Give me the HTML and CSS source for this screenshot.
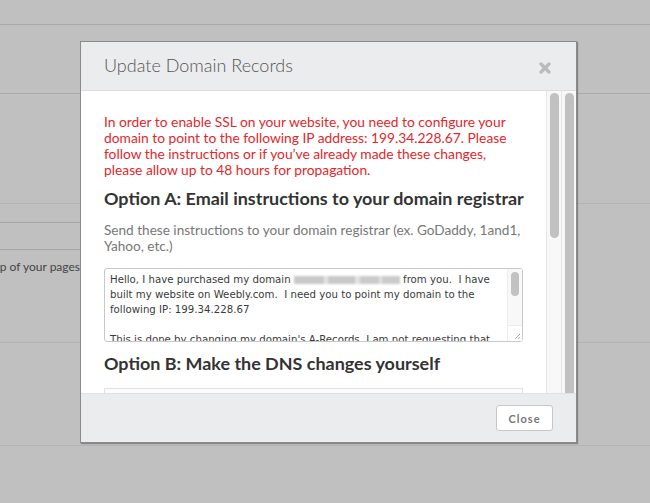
FILE: index.html
```html
<!DOCTYPE html>
<html>
<head>
<meta charset="utf-8">
<link rel="stylesheet" href="styles.css">
</head>
<body>
<div class="page">
  <div class="bg-row r1"></div>
  <div class="bg-row r2"></div>
  <div class="bg-row r3"></div>
  <div class="bg-row r4">
    <div class="bg-left">
      <div class="bl-a"></div>
      <div class="bl-b"></div>
      <div class="bl-text"><span>top of your pages</span></div>
    </div>
  </div>
  <div class="bg-row r5"></div>
</div>

<div class="modal">
  <div class="modal-head">
    <h1 class="modal-title">Update Domain Records</h1>
    <svg class="close-x" width="12" height="12" viewBox="0 0 12 12"><path d="M2 2 L10 10 M10 2 L2 10" stroke="#b9babc" stroke-width="3.2" stroke-linecap="round"/></svg>
  </div>
  <div class="modal-body">
    <div class="content">
      <p class="warn">In order to enable SSL on your website, you need to configure your domain to point to the following IP address: 199.34.228.67. Please follow the instructions or if you’ve already made these changes, please allow up to 48 hours for propagation.</p>
      <h2 class="opt">Option A: Email instructions to your domain registrar</h2>
      <p class="muted"><span class="nw">Send these instructions to your domain registrar (ex. GoDaddy, 1and1,</span><br>Yahoo, etc.)</p>
      <div class="ta">
        <div class="ta-text">Hello, I have purchased my domain <span class="blur"></span> from you.&nbsp; I have built my website on Weebly.com.&nbsp; I need you to point my domain to the following IP: 199.34.228.67<br><br>This is done by changing my domain's A-Records. I am not requesting that you change my nameservers.</div>
        <div class="ta-bar">
          <div class="ta-track"><div class="ta-thumb"></div></div>
          <div class="ta-corner">
            <svg width="8" height="8" viewBox="0 0 8 8"><path d="M7 2 L2 7 M7 5 L5 7" stroke="#999" stroke-width="0.8"/></svg>
          </div>
        </div>
      </div>
      <h2 class="opt opt-b">Option B: Make the DNS changes yourself</h2>
      <div class="dns-box"></div>
    </div>
    <div class="sb sb-inner"><div class="sb-thumb short"></div></div>
    <div class="sb sb-outer"><div class="sb-thumb full"></div></div>
  </div>
  <div class="modal-foot">
    <button class="btn">Close</button>
  </div>
</div>
</body>
</html>
```

FILE: styles.css
```css
html, body {
  margin: 0;
  padding: 0;
}
body {
  width: 650px;
  height: 503px;
  overflow: hidden;
  background: #c0c0c0;
  font-family: "Lato", "Open Sans", sans-serif;
  position: relative;
}
.page {
  height: 503px;
}
.bg-row {
  border-bottom: 1px solid #aaaaaa;
}
.r1 { height: 24px; }
.r2 { height: 68px; }
.r3 { height: 109px; border-bottom-color: #b4b4b4; }
.r4 { height: 138px; border-bottom-color: #b4b4b4; display: flex; }
.r5 { height: 102px; border-bottom-color: #b4b4b4; }
.bg-left {
  width: 80px;
  display: flex;
  flex-direction: column;
}
.bl-a { height: 18px; border-bottom: 1px solid #a4a4a4; }
.bl-b { height: 26px; border-bottom: 1px solid #a4a4a4; }
.bl-text {
  display: flex;
  justify-content: flex-end;
  overflow: hidden;
  white-space: nowrap;
  font-size: 12px;
  color: #444;
  padding-top: 9px;
  line-height: 16px;
}

.modal {
  position: absolute;
  left: 80px;
  top: 41px;
  width: 495px;
  height: 400px;
  border: 1px solid #8a8a8a;
  box-shadow: 1px 1px 1px rgba(0,0,0,0.3);
  background: #fff;
  display: flex;
  flex-direction: column;
}
.modal-head {
  height: 48px;
  background: #ebecee;
  border-bottom: 1px solid #dcdddf;
  display: flex;
  align-items: center;
  justify-content: space-between;
  padding: 0 25px 0 23px;
}
.modal-title {
  margin: 0 0 2px;
  font-size: 18px;
  font-weight: 300;
  color: #555;
}
.close-x {
  display: block;
  margin-top: 3px;
}
.modal-body {
  height: 302px;
  display: flex;
  overflow: hidden;
}
.content {
  width: 419px;
  padding: 23px 23px 0 23px;
  overflow: hidden;
}
.warn {
  margin: 0;
  color: #e5262b;
  font-size: 13.8px;
  line-height: 16px;
}
.opt {
  margin: 9px 0 0;
  font-size: 17.95px;
  font-weight: 700;
  line-height: 22px;
  color: #333;
  white-space: nowrap;
}
.muted {
  margin: 13px 0 0;
  font-size: 13.6px;
  line-height: 16px;
  color: #777;
}
.nw {
  white-space: nowrap;
}
.ta {
  margin-top: 14px;
  height: 72px;
  border: 1px solid #c8c8c8;
  border-radius: 3px;
  display: flex;
  overflow: hidden;
}
.ta-text {
  flex: 1;
  padding: 3px 1px 0 5px;
  font-family: "DejaVu Sans", sans-serif;
  font-size: 10.2px;
  line-height: 15px;
  color: #3a3a3a;
  overflow: hidden;
}
.blur {
  display: inline-block;
  width: 106px;
  height: 8px;
  vertical-align: -1px;
  background: linear-gradient(90deg, #c9c9c9 0 28%, #e4e4e4 28% 32%, #c9c9c9 32% 58%, #e2e2e2 58% 62%, #cacaca 62% 80%, #e0e0e0 80% 83%, #cbcbcb 83% 100%);
  filter: blur(1px);
}
.ta-bar {
  width: 14px;
  border-left: 1px solid #ececec;
  background: #f8f8f8;
  display: flex;
  flex-direction: column;
}
.ta-track {
  flex: 1;
  padding: 3px 0 0 3px;
}
.ta-thumb {
  width: 8px;
  height: 24px;
  border-radius: 4px;
  background: #c2c2c2;
}
.ta-corner {
  height: 14px;
  border-top: 1px solid #ececec;
  background: #fff;
  display: flex;
  align-items: flex-end;
  justify-content: flex-end;
  padding: 0 1px 1px 0;
}
.ta-corner svg { display: block; }
.opt-b {
  margin-top: 10px;
}
.dns-box {
  margin-top: 14px;
  height: 40px;
  border: 1px solid #e2e2e2;
  background: #fcfcfc;
}
.sb {
  background: #f8f8f8;
  border-left: 1px solid #e6e6e6;
  padding-top: 2px;
  box-sizing: border-box;
}
.sb-inner {
  width: 15px;
  padding-left: 3px;
}
.sb-outer {
  width: 15px;
  padding-left: 3px;
}
.sb-thumb {
  width: 9px;
  border-radius: 5px;
  background: #c1c1c1;
}
.sb-thumb.short { height: 145px; }
.sb-thumb.full { height: 310px; }
.modal-foot {
  flex: 1;
  background: #ebecee;
  border-top: 1px solid #e0e1e3;
  display: flex;
  align-items: center;
  justify-content: flex-end;
  padding-right: 23px;
}
.btn {
  width: 57px;
  height: 26px;
  background: #fff;
  border: 1px solid #c6c6c6;
  border-radius: 3px;
  font-family: "Lato", sans-serif;
  font-size: 11px;
  font-weight: 700;
  letter-spacing: 1px;
  color: #777;
  padding: 0;
}
```
